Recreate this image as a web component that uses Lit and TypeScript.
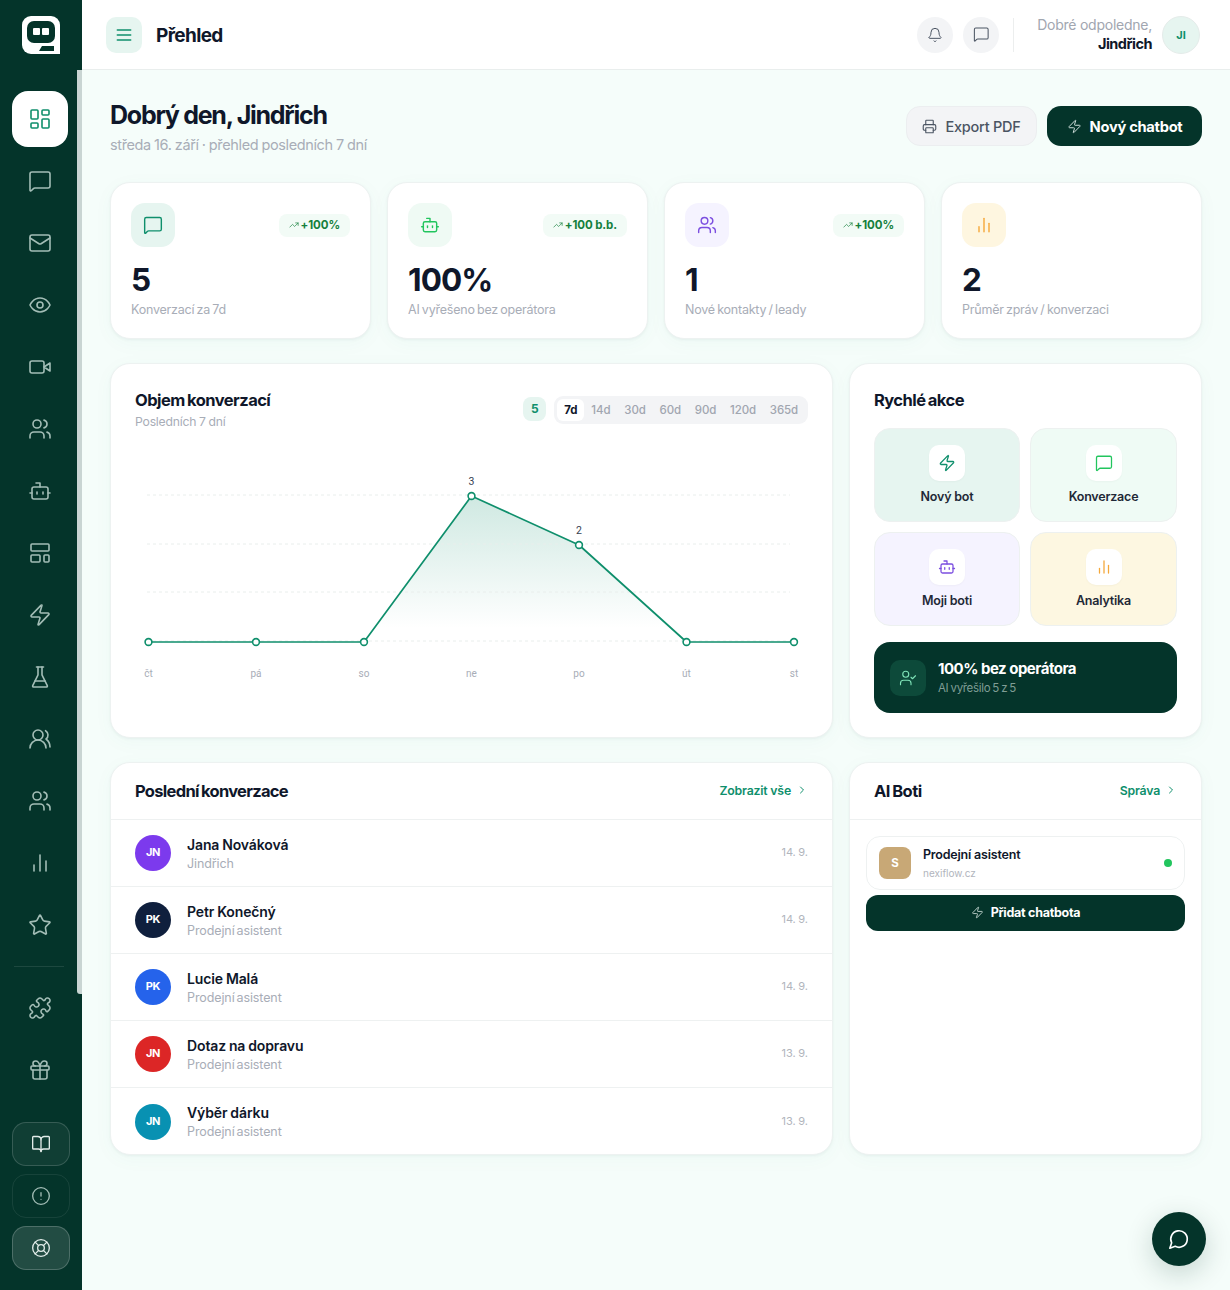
import { LitElement, html, css, svg } from "lit";
import { customElement } from "lit/decorators.js";

const I: Record<string, any> = {
  dash: svg`<rect x="3" y="3" width="7" height="9" rx="1"/><rect x="14" y="3" width="7" height="5" rx="1"/><rect x="14" y="12" width="7" height="9" rx="1"/><rect x="3" y="16" width="7" height="5" rx="1"/>`,
  msg: svg`<path d="M22 17a2 2 0 0 1-2 2H6.828a2 2 0 0 0-1.414.586l-2.202 2.202A.71.71 0 0 1 2 21.286V5a2 2 0 0 1 2-2h16a2 2 0 0 1 2 2z"/>`,
  mail: svg`<rect x="2" y="4" width="20" height="16" rx="2"/><path d="m22 7-8.97 5.7a1.94 1.94 0 0 1-2.06 0L2 7"/>`,
  eye: svg`<path d="M2 12s3-7 10-7 10 7 10 7-3 7-10 7-10-7-10-7Z"/><circle cx="12" cy="12" r="3"/>`,
  video: svg`<path d="m22 8-6 4 6 4V8Z"/><rect x="2" y="6" width="14" height="12" rx="2"/>`,
  users: svg`<path d="M16 21v-2a4 4 0 0 0-4-4H6a4 4 0 0 0-4 4v2"/><circle cx="9" cy="7" r="4"/><path d="M22 21v-2a4 4 0 0 0-3-3.87"/><path d="M16 3.13a4 4 0 0 1 0 7.75"/>`,
  usersRound: svg`<path d="M18 21a8 8 0 0 0-16 0"/><circle cx="10" cy="8" r="5"/><path d="M22 20c0-3.37-2-6.5-4-8a5 5 0 0 0-.45-8.3"/>`,
  bot: svg`<path d="M12 8V4H8"/><rect x="4" y="8" width="16" height="12" rx="2"/><path d="M2 14h2"/><path d="M20 14h2"/><path d="M15 13v2"/><path d="M9 13v2"/>`,
  tpl: svg`<rect x="3" y="3" width="18" height="7" rx="1"/><rect x="3" y="14" width="9" height="7" rx="1"/><rect x="16" y="14" width="5" height="7" rx="1"/>`,
  zap: svg`<path d="M4 14a1 1 0 0 1-.78-1.63l9.9-10.2a.5.5 0 0 1 .86.46l-1.92 6.02A1 1 0 0 0 13 10h7a1 1 0 0 1 .78 1.63l-9.9 10.2a.5.5 0 0 1-.86-.46l1.92-6.02A1 1 0 0 0 11 14z"/>`,
  flask: svg`<path d="M10 2v7.527a2 2 0 0 1-.211.896L4.72 20.55a1 1 0 0 0 .9 1.45h12.76a1 1 0 0 0 .9-1.45l-5.069-10.127A2 2 0 0 1 14 9.527V2"/><path d="M8.5 2h7"/><path d="M7 16h10"/>`,
  bars: svg`<path d="M18 20V10"/><path d="M12 20V4"/><path d="M6 20v-6"/>`,
  star: svg`<path d="M11.525 2.295a.53.53 0 0 1 .95 0l2.31 4.679a2.123 2.123 0 0 0 1.595 1.16l5.166.756a.53.53 0 0 1 .294.904l-3.736 3.638a2.123 2.123 0 0 0-.611 1.878l.882 5.14a.53.53 0 0 1-.771.56l-4.618-2.428a2.122 2.122 0 0 0-1.973 0L6.396 21.01a.53.53 0 0 1-.77-.56l.881-5.139a2.122 2.122 0 0 0-.611-1.879L2.16 9.795a.53.53 0 0 1 .294-.906l5.165-.755a2.122 2.122 0 0 0 1.597-1.16z"/>`,
  puzzle: svg`<path d="M19.439 7.85c-.049.322.059.648.289.878l1.568 1.568c.47.47.706 1.087.706 1.704s-.235 1.233-.706 1.704l-1.611 1.611a.98.98 0 0 1-.837.276c-.47-.07-.802-.48-.968-.925a2.501 2.501 0 1 0-3.214 3.214c.446.166.855.497.925.968a.979.979 0 0 1-.276.837l-1.61 1.61a2.404 2.404 0 0 1-1.705.707 2.402 2.402 0 0 1-1.704-.706l-1.568-1.568a1.026 1.026 0 0 0-.877-.29c-.493.074-.84.504-1.02.968a2.5 2.5 0 1 1-3.237-3.237c.464-.18.894-.527.967-1.02a1.026 1.026 0 0 0-.289-.877l-1.568-1.568A2.402 2.402 0 0 1 1.998 12c0-.617.236-1.234.706-1.704L4.23 8.77c.24-.24.581-.353.917-.303.515.077.877.528 1.073 1.01a2.5 2.5 0 1 0 3.259-3.259c-.482-.196-.933-.558-1.01-1.073-.05-.336.062-.676.303-.917l1.525-1.525A2.402 2.402 0 0 1 12 1.998c.617 0 1.234.236 1.704.706l1.568 1.568c.23.23.556.338.877.29.493-.074.84-.504 1.02-.968a2.5 2.5 0 1 1 3.237 3.237c-.464.18-.894.527-.967 1.02Z"/>`,
  gift: svg`<rect x="3" y="8" width="18" height="4" rx="1"/><path d="M12 8v13"/><path d="M19 12v7a2 2 0 0 1-2 2H7a2 2 0 0 1-2-2v-7"/><path d="M7.5 8a2.5 2.5 0 0 1 0-5A4.8 8 0 0 1 12 8a4.8 8 0 0 1 4.5-5 2.5 2.5 0 0 1 0 5"/>`,
  book: svg`<path d="M12 7v14"/><path d="M3 18a1 1 0 0 1-1-1V4a1 1 0 0 1 1-1h5a4 4 0 0 1 4 4 4 4 0 0 1 4-4h5a1 1 0 0 1 1 1v13a1 1 0 0 1-1 1h-6a3 3 0 0 0-3 3 3 3 0 0 0-3-3z"/>`,
  alert: svg`<circle cx="12" cy="12" r="10"/><path d="M12 8v4"/><path d="M12 16h.01"/>`,
  buoy: svg`<circle cx="12" cy="12" r="10"/><path d="m4.93 4.93 4.24 4.24"/><path d="m14.83 9.17 4.24-4.24"/><path d="m14.83 14.83 4.24 4.24"/><path d="m9.17 14.83-4.24 4.24"/><circle cx="12" cy="12" r="4"/>`,
  menu: svg`<path d="M4 12h16"/><path d="M4 18h16"/><path d="M4 6h16"/>`,
  bell: svg`<path d="M10.268 21a2 2 0 0 0 3.464 0"/><path d="M3.262 15.326A1 1 0 0 0 4 17h16a1 1 0 0 0 .74-1.673C19.41 13.956 18 12.499 18 8A6 6 0 0 0 6 8c0 4.499-1.411 5.956-2.738 7.326"/>`,
  printer: svg`<path d="M6 18H4a2 2 0 0 1-2-2v-5a2 2 0 0 1 2-2h16a2 2 0 0 1 2 2v5a2 2 0 0 1-2 2h-2"/><path d="M6 9V3a1 1 0 0 1 1-1h10a1 1 0 0 1 1 1v6"/><rect x="6" y="14" width="12" height="8" rx="1"/>`,
  trend: svg`<path d="M16 7h6v6"/><path d="m22 7-8.5 8.5-5-5L2 17"/>`,
  chev: svg`<path d="m9 18 6-6-6-6"/>`,
  userCheck: svg`<path d="m16 11 2 2 4-4"/><path d="M16 21v-2a4 4 0 0 0-4-4H6a4 4 0 0 0-4 4v2"/><circle cx="9" cy="7" r="4"/>`,
  circleMsg: svg`<path d="M7.9 20A9 9 0 1 0 4 16.1L2 22Z"/>`,
};

const ic = (n: string, size: number, sw = 2) =>
  html`<svg width=${size} height=${size} viewBox="0 0 24 24" fill="none" stroke="currentColor" stroke-width=${sw} stroke-linecap="round" stroke-linejoin="round">${I[n]}</svg>`;

const pts: [number, number][] = [[38.5,278],[146,278],[254,278],[361.5,132],[469,181],[576.5,278],[684,278]];
const labels = ["čt","pá","so","ne","po","út","st"];

@customElement("app-root")
export class AppRoot extends LitElement {
  static styles = css`
    :host { display: block; height: 1290px; overflow: hidden; font-family: Inter, "Noto Sans", sans-serif; color: #0f172a; background: #f5fdfa; }
    * { box-sizing: border-box; }
    .app { display: flex; height: 1290px; }
    .side { width: 82px; flex: none; background: #04342a; display: flex; flex-direction: column; position: relative; }
    .logo { height: 70px; display: flex; align-items: center; justify-content: center; }
    .thumb { position: absolute; top: 70px; right: 0; width: 5px; height: 924px; background: #c9d5d3; border-radius: 0 0 0 3px; }
    .nav { display: flex; flex-direction: column; gap: 6px; padding: 21px 14px 0 12px; }
    .ni { width: 56px; height: 56px; border-radius: 16px; display: flex; align-items: center; justify-content: center; color: #a3bdb6; }
    .ni.on { background: #fff; color: #0f8f6c; }
    .ni.first { margin-top: 7px; }
    .div { height: 1px; background: rgba(255,255,255,.1); margin: 7px 4px 0 2px; }
    .bot { margin-top: auto; padding: 0 12px 20px; display: flex; flex-direction: column; gap: 8px; }
    .bb { height: 44px; width: 58px; border-radius: 14px; display: flex; align-items: center; justify-content: center; color: #e2ece9; border: 1px solid rgba(255,255,255,.16); background: rgba(255,255,255,.05); }
    .bb.dim { border-color: rgba(255,255,255,.08); background: transparent; color: #a3bdb6; }
    .bb.hi { background: rgba(255,255,255,.12); border-color: rgba(255,255,255,.2); }
    .main { flex: 1; min-width: 0; display: flex; flex-direction: column; }
    .top { height: 70px; flex: none; background: #fff; border-bottom: 1px solid #e9eeed; display: flex; align-items: center; padding: 0 30px 0 24px; }
    .burger { width: 36px; height: 36px; border-radius: 10px; background: #e6f5f0; color: #0f8f6c; display: flex; align-items: center; justify-content: center; }
    .ttl { font-size: 19px; line-height: 24px; padding-top: 2px; font-weight: 700; margin-left: 14px; letter-spacing: -.65px; }
    .sp { flex: 1; }
    .rb { width: 36px; height: 36px; border-radius: 50%; background: #f3f4f6; color: #4b5563; display: flex; align-items: center; justify-content: center; margin-left: 10px; }
    .vr { width: 1px; height: 34px; background: #eceeee; margin: 0 23px 0 14px; }
    .who { text-align: right; line-height: 18px; }
    .who small { display: block; font-size: 14px; color: #a1a6b0; letter-spacing: -.25px; margin-top: -1px; margin-bottom: 1px; }
    .who b { display: block; font-size: 14.5px; font-weight: 700; letter-spacing: -.5px; }
    .av { width: 38px; height: 38px; border-radius: 50%; background: #e6f5f0; border: 1px solid #e5ecea; color: #0f8f6c; font-size: 11px; font-weight: 700; display: flex; align-items: center; justify-content: center; margin-left: 10px; }
    .page { padding: 28px 28px 0; display: flex; flex-direction: column; }
    .hd { display: flex; align-items: flex-start; height: 84px; }
    h1 { margin: 1px 0 0; font-size: 25px; line-height: 32px; font-weight: 700; letter-spacing: -1.25px; }
    .sub { font-size: 14.5px; line-height: 20px; margin-top: 4px; color: #a8adb7; letter-spacing: -.37px; word-spacing: -.5px; }
    .btns { margin-left: auto; display: flex; gap: 10px; margin-top: 8px; }
    .btn { height: 40px; border-radius: 14px; display: flex; align-items: center; justify-content: center; gap: 8px; font-size: 14.5px; letter-spacing: -.25px; }
    .exp { width: 131px; background: #f3f4f6; border: 1px solid #eceef0; color: #4b5563; font-weight: 500; }
    .new { width: 155px; padding-top: 1px; background: #04342a; color: #fff; font-weight: 700; letter-spacing: -.3px; font-size: 14.7px; }
    .new svg { color: #cfdeda; }
    .stats { display: grid; grid-template-columns: repeat(4, 1fr); gap: 16px; }
    .card { background: #fff; border: 1px solid #edf2f1; border-radius: 20px; box-shadow: 0 1px 3px rgba(15,60,50,.05), 0 4px 20px rgba(15,143,108,.035); }
    .st { height: 157px; padding: 20px; }
    .st-top { display: flex; align-items: center; justify-content: space-between; }
    .si { width: 44px; height: 44px; border-radius: 14px; display: flex; align-items: center; justify-content: center; }
    .pill { height: 23px; padding: 0 10px; border-radius: 8px; background: #f2fbf6; color: #15803d; font-size: 11.5px; font-weight: 700; display: flex; align-items: center; gap: 2px; letter-spacing: -.1px; }
    .val { font-size: 31.5px; line-height: 38px; font-weight: 700; margin-top: 14px; letter-spacing: -.9px; }
    .lbl { font-size: 12.5px; line-height: 18px; color: #a8adb7; margin-top: 2px; letter-spacing: -.22px; word-spacing: -1px; }
    .row { display: grid; grid-template-columns: 723px 353px; gap: 16px; margin-top: 24px; }
    .chart { height: 375px; padding: 24px; position: relative; }
    .ch { display: flex; align-items: flex-start; position: relative; }
    h2 { margin: 0; font-size: 16.5px; line-height: 24px; font-weight: 700; letter-spacing: -.55px; word-spacing: -1px; }
    h2.tight { letter-spacing: -.7px; }
    .ch small { display: block; font-size: 12.2px; line-height: 18px; margin-top: 1px; color: #a8adb7; letter-spacing: -.2px; word-spacing: -.5px; }
    .cnt { width: 23px; height: 24px; padding-bottom: 1px; border-radius: 8px; background: #e6f5f0; color: #0f8f6c; font-size: 12px; font-weight: 700; display: flex; align-items: center; justify-content: center; margin: 9px 8px 0 auto; }
    .rng { display: flex; align-items: center; height: 28px; padding: 3px; background: #f3f4f6; border-radius: 9px; margin-top: 8px; font-size: 11.5px; font-weight: 500; color: #a1a6b0; }
    .rng span { padding: 0 6.9px; line-height: 22px; height: 22px; letter-spacing: -.1px; }
    .rng .on { padding: 0 7px; background: #fff; color: #0f172a; font-weight: 700; border-radius: 6px; }
    .plot { position: absolute; left: -1px; top: 0; }
    .plot text { font-family: Roboto, sans-serif; }
    .qa { height: 375px; padding: 24px; }
    .qg { display: grid; grid-template-columns: 146px 147px; gap: 10px; margin-top: 16px; }
    .q { height: 94px; border-radius: 16px; border: 1px solid #edf1f0; display: flex; flex-direction: column; align-items: center; padding-top: 16px; font-size: 12.5px; font-weight: 600; letter-spacing: -.2px; color: #1f2937; }
    .qi { width: 36px; height: 36px; background: #fff; border-radius: 10px; display: flex; align-items: center; justify-content: center; margin-bottom: 8px; box-shadow: 0 1px 2px rgba(0,0,0,.03); }
    .ban { margin-top: 16px; height: 71px; border-radius: 16px; background: #04342a; display: flex; align-items: center; padding: 0 16px; gap: 12px; color: #fff; }
    .bi { width: 36px; height: 36px; border-radius: 10px; background: #0d4a3a; color: #7fe3b8; display: flex; align-items: center; justify-content: center; }
    .bt { padding-bottom: 2px; }
    .ban b { display: block; font-size: 15px; line-height: 22px; font-weight: 700; letter-spacing: -.5px; }
    .ban small { display: block; font-size: 11.5px; line-height: 16px; color: #7f9d95; letter-spacing: -.32px; word-spacing: -.8px; }
    .list { height: 393px; overflow: hidden; }
    .lh { height: 57px; display: flex; align-items: center; justify-content: space-between; padding: 0 24px; border-bottom: 1px solid #eef1f1; }
    .more { display: flex; align-items: center; gap: 5px; font-size: 12.3px; padding-bottom: 2px; font-weight: 600; color: #0f8f6c; letter-spacing: -.2px; }
    .more svg { color: #0f8f6c; }
    .ci { height: 67px; display: flex; align-items: center; padding: 0 24px; border-bottom: 1px solid #eef1f1; gap: 16px; }
    .ci:last-child { border-bottom: 0; }
    .ca { width: 36px; height: 36px; border-radius: 50%; padding-bottom: 2px; color: #fff; display: flex; align-items: center; justify-content: center; font-size: 11px; font-weight: 700; letter-spacing: -.3px; }
    .ct { flex: 1; padding-top: 1px; }
    .ct b { display: block; font-size: 14px; line-height: 19px; font-weight: 600; letter-spacing: -.12px; word-spacing: -.5px; }
    .ct small { display: block; font-size: 12.5px; line-height: 18px; margin-top: 1px; color: #a8adb7; letter-spacing: -.1px; word-spacing: -1.5px; }
    .dt { font-size: 11px; color: #b1b5bd; padding-bottom: 2px; word-spacing: -.6px; }
    .botc { padding: 16px; }
    .bc { height: 54px; border: 1px solid #eef1f1; border-radius: 14px; display: flex; align-items: center; padding: 0 12px; }
    .bs { width: 32px; height: 32px; border-radius: 8px; background: #c8a876; color: #fff; font-size: 11.5px; font-weight: 700; display: flex; align-items: center; justify-content: center; margin-right: 12px; }
    .bc b { display: block; font-size: 12.5px; line-height: 18px; font-weight: 600; letter-spacing: -.2px; }
    .bc small { display: block; font-size: 10px; line-height: 16px; color: #b1b5bd; margin-top: 1px; }
    .dot { width: 8px; height: 8px; border-radius: 50%; background: #22c55e; margin-left: auto; }
    .add { height: 36px; margin-top: 5px; padding-bottom: 1px; border-radius: 12px; background: #04342a; color: #fff; font-size: 12.5px; font-weight: 700; display: flex; align-items: center; justify-content: center; gap: 7px; letter-spacing: -.27px; }
    .add svg { color: #cfdeda; }
    .fab { position: absolute; left: 1152px; top: 1212px; width: 54px; height: 54px; border-radius: 50%; background: #04342a; color: #fff; display: flex; align-items: center; justify-content: center; box-shadow: 0 8px 28px rgba(4,52,42,.2); }
  `;

  render() {
    const top = ["dash","msg","mail","eye","video","users","bot","tpl","zap","flask","usersRound","users","bars","star"];
    const stats = [
      { i:"msg", bg:"#e6f5f0", c:"#0f8f6c", p:"+100%", v:"5", l:"Konverzací za 7d" },
      { i:"bot", bg:"#effaf4", c:"#22c55e", p:"+100 b.b.", v:"100%", l:"AI vyřešeno bez operátora" },
      { i:"users", bg:"#f5f3ff", c:"#7c4fe0", p:"+100%", v:"1", l:"Nové kontakty / leady" },
      { i:"bars", bg:"#fef6e0", c:"#f5a83a", p:"", v:"2", l:"Průměr zpráv / konverzaci" },
    ];
    const quick = [
      { i:"zap", n:"Nový bot", bg:"#e6f5f0", c:"#0f8f6c" },
      { i:"msg", n:"Konverzace", bg:"#effbf5", c:"#22c55e" },
      { i:"bot", n:"Moji boti", bg:"#f5f3ff", c:"#7c4fe0" },
      { i:"bars", n:"Analytika", bg:"#fdf7e1", c:"#f5a83a" },
    ];
    const conv = [
      { a:"JN", bg:"#7c3aed", t:"Jana Nováková", s:"Jindřich", d:"14. 9." },
      { a:"PK", bg:"#0f1f3d", t:"Petr Konečný", s:"Prodejní asistent", d:"14. 9." },
      { a:"PK", bg:"#2563eb", t:"Lucie Malá", s:"Prodejní asistent", d:"14. 9." },
      { a:"JN", bg:"#dc2626", t:"Dotaz na dopravu", s:"Prodejní asistent", d:"13. 9." },
      { a:"JN", bg:"#0891b2", t:"Výběr dárku", s:"Prodejní asistent", d:"13. 9." },
    ];
    const poly = pts.map(p => p.join(",")).join(" ");
    return html`<div class="app">
      <aside class="side">
        <div class="logo">
          <svg width="38" height="38" viewBox="0 0 38 38">
            <path d="M9 0h20a9 9 0 0 1 9 9v29H9a9 9 0 0 1-9-9V9a9 9 0 0 1 9-9z" fill="#fff"/>
            <rect x="5" y="5" width="28" height="22" rx="7" fill="#04342a"/>
            <rect x="11" y="12" width="7" height="7" rx="1" fill="#fff"/>
            <rect x="20" y="12" width="7" height="7" rx="1" fill="#fff"/>
            <path d="M17 35l3-5h12v5z" fill="#04342a"/>
          </svg>
        </div>
        <div class="thumb"></div>
        <div class="nav">
          ${top.map((n,i)=>html`<div class="ni ${i===0?"on":""}">${ic(n,24,1.6)}</div>`)}
          <div class="div"></div>
          <div class="ni first">${ic("puzzle",24,1.6)}</div>
          <div class="ni">${ic("gift",24,1.6)}</div>
        </div>
        <div class="bot">
          <div class="bb">${ic("book",20,1.6)}</div>
          <div class="bb dim">${ic("alert",20,1.6)}</div>
          <div class="bb hi">${ic("buoy",20,1.6)}</div>
        </div>
      </aside>
      <div class="main">
        <header class="top">
          <div class="burger">${ic("menu",20,1.8)}</div>
          <div class="ttl">Přehled</div>
          <div class="sp"></div>
          <div class="rb">${ic("bell",16,1.5)}</div>
          <div class="rb">${ic("msg",16.5,1.5)}</div>
          <div class="vr"></div>
          <div class="who"><small>Dobré odpoledne,</small><b>Jindřich</b></div>
          <div class="av">JI</div>
        </header>
        <div class="page">
          <div class="hd">
            <div>
              <h1>Dobrý den, Jindřich</h1>
              <div class="sub">středa 16. září · přehled posledních 7 dní</div>
            </div>
            <div class="btns">
              <div class="btn exp">${ic("printer",15,1.8)}Export PDF</div>
              <div class="btn new">${ic("zap",15,1.6)}Nový chatbot</div>
            </div>
          </div>
          <div class="stats">
            ${stats.map(s=>html`<div class="card st">
              <div class="st-top">
                <div class="si" style="background:${s.bg};color:${s.c}">${ic(s.i,20,1.7)}</div>
                ${s.p?html`<div class="pill">${ic("trend",10,1.6)}${s.p}</div>`:""}
              </div>
              <div class="val">${s.v}</div>
              <div class="lbl">${s.l}</div>
            </div>`)}
          </div>
          <div class="row">
            <div class="card chart">
              <svg class="plot" width="723" height="375" viewBox="0 0 723 375">
                <defs><linearGradient id="g" x1="0" y1="132" x2="0" y2="264" gradientUnits="userSpaceOnUse">
                  <stop offset="0" stop-color="#0f8f6c" stop-opacity=".2"/><stop offset="1" stop-color="#0f8f6c" stop-opacity="0"/>
                </linearGradient></defs>
                <path d="M254 278 L361.5 132 L469 181 L576.5 278 Z" fill="url(#g)"/>
                ${[132,181,229,278].map(y=>svg`<line x1="37" x2="680" y1=${y-1} y2=${y-1} stroke="#e9eeec" stroke-dasharray="3 3"/>`)}
                <polyline points=${poly} fill="none" stroke="#0f8f6c" stroke-width="1.7" stroke-linejoin="round"/>
                ${pts.map(p=>svg`<circle cx=${p[0]} cy=${p[1]} r="3.4" fill="#fff" stroke="#0f8f6c" stroke-width="1.6"/>`)}
                <text x="361.5" y="121" text-anchor="middle" font-size="10.5" fill="#374151">3</text>
                <text x="469" y="170" text-anchor="middle" font-size="10.5" fill="#374151">2</text>
                ${pts.map((p,i)=>svg`<text x=${p[0]} y="313" text-anchor="middle" font-size="10" fill="#a8adb7">${labels[i]}</text>`)}
              </svg>
              <div class="ch">
                <div><h2>Objem konverzací</h2><small>Posledních 7 dní</small></div>
                <div class="cnt">5</div>
                <div class="rng"><span class="on">7d</span><span>14d</span><span>30d</span><span>60d</span><span>90d</span><span>120d</span><span>365d</span></div>
              </div>
            </div>
            <div class="card qa">
              <h2>Rychlé akce</h2>
              <div class="qg">
                ${quick.map(q=>html`<div class="q" style="background:${q.bg}"><div class="qi" style="color:${q.c}">${ic(q.i,18,1.7)}</div>${q.n}</div>`)}
              </div>
              <div class="ban">
                <div class="bi">${ic("userCheck",18,1.5)}</div>
                <div class="bt"><b>100% bez operátora</b><small>AI vyřešilo 5 z 5</small></div>
              </div>
            </div>
          </div>
          <div class="row">
            <div class="card list">
              <div class="lh"><h2 class="tight">Poslední konverzace</h2><div class="more">Zobrazit vše ${ic("chev",12,2)}</div></div>
              ${conv.map(c=>html`<div class="ci">
                <div class="ca" style="background:${c.bg}">${c.a}</div>
                <div class="ct"><b>${c.t}</b><small>${c.s}</small></div>
                <div class="dt">${c.d}</div>
              </div>`)}
            </div>
            <div class="card list">
              <div class="lh"><h2>AI Boti</h2><div class="more">Správa ${ic("chev",12,2)}</div></div>
              <div class="botc">
                <div class="bc">
                  <div class="bs">S</div>
                  <div><b>Prodejní asistent</b><small>nexiflow.cz</small></div>
                  <div class="dot"></div>
                </div>
                <div class="add">${ic("zap",13,1.6)}Přidat chatbota</div>
              </div>
            </div>
          </div>
        </div>
      </div>
      <div class="fab">${ic("circleMsg",22,1.8)}</div>
    </div>`;
  }
}
